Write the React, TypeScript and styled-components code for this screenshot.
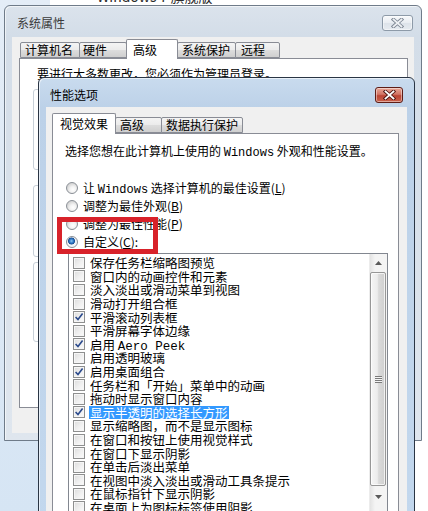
import React from "react";
import styled, { createGlobalStyle } from "styled-components";

const Global = createGlobalStyle`
  html, body { margin: 0; padding: 0; }
  body {
    width: 428px;
    height: 511px;
    overflow: hidden;
    font-family: "Noto Sans CJK SC", "Liberation Sans", sans-serif;
    font-size: 12px;
    color: #000;
  }
`;

const CJK = `"Noto Sans CJK SC", "Liberation Sans", sans-serif`;

const Desktop = styled.div`
  position: relative;
  width: 428px;
  height: 511px;
  overflow: hidden;
  display: flex;
  background: #fff;
`;

const NavPane = styled.div`
  width: 50px;
  background: linear-gradient(180deg, #e4edf7 0%, #d6e5f4 100%);
`;

const MainPane = styled.div`
  flex: 1;
  background: #fff;
`;

const Heading = styled.div`
  margin: -12px 0 0 47px;
  font-family: ${CJK};
  font-size: 14px;
  line-height: 16px;
  color: #2b2b2b;
`;

/* ---------- windows ---------- */

const Window = styled.div<{ $active?: boolean }>`
  position: absolute;
  box-sizing: border-box;
  display: flex;
  flex-direction: column;
  border: 1px solid ${(p) => (p.$active ? "#2a3544" : "#6f7b89")};
  border-radius: 6px 6px 0 0;
  background: ${(p) =>
    p.$active
      ? "linear-gradient(180deg, #c9dbee 0px, #bcd1e8 30px, #c3d8ee 100%)"
      : "linear-gradient(180deg, #dbe3ec 0px, #d3dde8 30px, #dfe6ee 100%)"};
  box-shadow: inset 1px 1px 0 rgba(255, 255, 255, 0.6);
`;

const OuterWindow = styled(Window)`
  left: 4px;
  top: 5px;
  width: 418px;
  height: 436px;
`;

const InnerWindow = styled(Window)`
  left: 38px;
  top: 77px;
  width: 377px;
  height: 470px;
`;

const TitleBar = styled.div<{ $h: number; $pt: number; $pl: number; $pr: number }>`
  height: ${(p) => p.$h}px;
  flex: none;
  box-sizing: border-box;
  display: flex;
  align-items: flex-start;
  justify-content: space-between;
  padding: ${(p) => `${p.$pt}px ${p.$pr}px 0 ${p.$pl}px`};
`;

const Title = styled.span<{ $active?: boolean }>`
  display: inline-block;
  height: 16px;
  font-family: ${CJK};
  font-size: 12px;
  line-height: 16px;
  color: ${(p) => (p.$active ? "#000" : "#3a3a3a")};
`;

const CloseBtn = styled.div<{ $active?: boolean; $w: number; $h: number }>`
  width: ${(p) => p.$w}px;
  height: ${(p) => p.$h}px;
  box-sizing: border-box;
  border-radius: 3px;
  display: flex;
  align-items: center;
  justify-content: center;
  border: 1px solid ${(p) => (p.$active ? "#5e1d16" : "#8d9aa8")};
  background: ${(p) =>
    p.$active
      ? "linear-gradient(180deg, #e8a898 0%, #d27464 45%, #bb4434 55%, #c9624c 100%)"
      : "linear-gradient(180deg, #f7f9fb 0%, #e9edf2 50%, #dde3ea 51%, #e6ebf0 100%)"};
  box-shadow: inset 0 0 0 1px rgba(255, 255, 255, 0.45);
`;

const CloseGlyph = ({ active }: { active?: boolean }) => (
  <svg width="13" height="10" viewBox="0 0 13 10">
    <path
      d="M2.5 1.5 L10.5 8.5 M10.5 1.5 L2.5 8.5"
      stroke={active ? "#4a1410" : "#7d8794"}
      strokeWidth="3.6"
      strokeLinecap="square"
      fill="none"
    />
    <path
      d="M2.5 1.5 L10.5 8.5 M10.5 1.5 L2.5 8.5"
      stroke={active ? "#ffffff" : "#eef1f4"}
      strokeWidth="1.8"
      strokeLinecap="square"
      fill="none"
    />
  </svg>
);

const Client = styled.div<{ $ml: number; $mr: number; $pt: number; $pl: number; $pr: number }>`
  flex: 1;
  display: flex;
  flex-direction: column;
  background: #f0f0f0;
  margin: 0 ${(p) => p.$mr}px 7px ${(p) => p.$ml}px;
  padding: ${(p) => `${p.$pt}px ${p.$pr}px 0 ${p.$pl}px`};
  min-height: 0;
`;

const TabStrip = styled.div<{ $h: number; $pl: number }>`
  height: ${(p) => p.$h}px;
  flex: none;
  display: flex;
  align-items: flex-end;
  padding-left: ${(p) => p.$pl}px;
  position: relative;
  z-index: 1;
`;

const Tab = styled.div<{ $w: number; $sel?: boolean; $h: number; $pl: number }>`
  width: ${(p) => p.$w}px;
  height: ${(p) => p.$h}px;
  box-sizing: border-box;
  border: 1px solid #898c95;
  border-bottom: ${(p) => (p.$sel ? "none" : "1px solid #898c95")};
  margin-bottom: ${(p) => (p.$sel ? "-1px" : "0")};
  border-radius: 2px 2px 0 0;
  background: ${(p) =>
    p.$sel ? "#fff" : "linear-gradient(180deg, #f4f4f4 0%, #ebebeb 50%, #dddddd 51%, #cfcfcf 100%)"};
  display: flex;
  align-items: center;
  padding-left: ${(p) => p.$pl}px;
  font-family: ${CJK};
  font-size: 12px;
  line-height: 14px;
  white-space: nowrap;
  margin-right: -1px;
`;

const Panel = styled.div<{ $h?: number }>`
  box-sizing: border-box;
  background: #fff;
  border: 1px solid #898c95;
  ${(p) => (p.$h ? `height: ${p.$h}px; flex: none;` : "flex: 1;")}
  display: flex;
  flex-direction: column;
  min-height: 0;
`;

/* ---------- outer panel content ---------- */

const OuterText = styled.div`
  padding: 8px 0 0 17px;
  font-family: ${CJK};
  font-size: 12px;
  line-height: 14px;
  height: 14px;
  white-space: nowrap;
`;

const GroupBox = styled.div<{ $mt: number; $h: number }>`
  margin: ${(p) => p.$mt}px 0 0 13px;
  width: 362px;
  height: ${(p) => p.$h}px;
  box-sizing: border-box;
  border: 1px solid #c8d0d8;
  border-radius: 3px;
`;

/* ---------- inner panel content ---------- */

const InnerContent = styled.div`
  padding: 10px 10px 0 12px;
  display: flex;
  flex-direction: column;
`;

const Desc = styled.div`
  font-family: ${CJK};
  font-size: 12px;
  line-height: 14px;
  height: 14px;
  white-space: nowrap;
`;

const Mono = styled.span`
  font-family: "Liberation Mono", "DejaVu Sans Mono", monospace;
`;

const RadioGroup = styled.div`
  margin: 21px 0 0 1px;
  display: flex;
  flex-direction: column;
`;

const RadioRow = styled.div`
  height: 18px;
  display: flex;
  align-items: center;
  gap: 5px;
  white-space: nowrap;
`;

const RadioLabel = styled.span`
  display: inline-block;
  height: 14px;
  font-family: ${CJK};
  font-size: 12px;
  line-height: 14px;
`;

const RadioDot = styled.span<{ $on?: boolean }>`
  width: 12px;
  height: 12px;
  flex: none;
  box-sizing: border-box;
  border-radius: 50%;
  border: 1px solid #8a8f96;
  background: ${(p) =>
    p.$on
      ? "radial-gradient(circle at 45% 40%, #8fc8f2 0px, #2f79c6 2px, #1a4f94 3.2px, #eef2f6 3.8px, #ffffff 100%)"
      : "radial-gradient(circle at 60% 65%, #ffffff 0px, #f3f3f3 3px, #d7d7d7 6px)"};
`;

const ListBox = styled.div`
  margin: 2px 0 0 3px;
  width: 320px;
  height: 270px;
  box-sizing: border-box;
  border: 1px solid #828790;
  display: flex;
  background: #fff;
`;

const ListItems = styled.div`
  flex: 1;
  padding-top: 2px;
  display: flex;
  flex-direction: column;
  overflow: hidden;
`;

const ItemRow = styled.div`
  height: 13.6px;
  flex: none;
  display: flex;
  align-items: center;
  padding-left: 4px;
  gap: 4px;
  white-space: nowrap;
`;

const CheckBox = styled.span`
  width: 12px;
  height: 12px;
  flex: none;
  box-sizing: border-box;
  border: 1px solid #8e8f8f;
  background: linear-gradient(135deg, #dcdcdc 0%, #f0f0f0 55%, #fbfbfb 100%);
  box-shadow: inset 0 0 0 1px #f6f6f6;
  display: flex;
  align-items: center;
  justify-content: center;
`;

const ItemText = styled.span<{ $sel?: boolean }>`
  display: inline-block;
  height: 13px;
  font-family: ${CJK};
  font-size: 12.5px;
  line-height: 13px;
  padding: 0 1px;
  color: ${(p) => (p.$sel ? "#fff" : "#000")};
  background: ${(p) => (p.$sel ? "#3399ff" : "transparent")};
`;

const ScrollBar = styled.div`
  width: 17px;
  flex: none;
  display: flex;
  flex-direction: column;
  background: linear-gradient(90deg, #e3e3e3 0%, #f4f4f4 30%, #f4f4f4 100%);
  border-left: 1px solid #ececec;
`;

const ArrowBtn = styled.div`
  height: 17px;
  flex: none;
  display: flex;
  align-items: center;
  justify-content: center;
`;

const Thumb = styled.div`
  margin: 1px 1px 2px 0;
  height: 214px;
  box-sizing: border-box;
  border: 1px solid #979797;
  border-radius: 2px;
  background: linear-gradient(90deg, #f5f5f5 0%, #ececec 45%, #dadada 55%, #cfcfcf 100%);
  box-shadow: inset 0 0 0 1px rgba(255, 255, 255, 0.7);
  display: flex;
  align-items: center;
  justify-content: center;
`;

const Grip = styled.div`
  width: 7px;
  height: 7px;
  background: repeating-linear-gradient(180deg, #7a7a7a 0px, #7a7a7a 1px, #f4f4f4 1px, #f4f4f4 2px);
`;

const RedBox = styled.div`
  position: absolute;
  left: 57px;
  top: 217px;
  width: 101px;
  height: 37px;
  box-sizing: border-box;
  border: 5px solid #d8222a;
`;

const Check = () => (
  <svg width="10" height="10" viewBox="0 0 10 10">
    <path d="M1.6 5 L4 7.6 L8.6 1.6" stroke="#2b4a8c" strokeWidth="1.6" fill="none" />
  </svg>
);

const Tri = ({ up }: { up?: boolean }) => (
  <svg width="7" height="4" viewBox="0 0 7 4">
    <path d={up ? "M0 4 L3.5 0 L7 4 Z" : "M0 0 L3.5 4 L7 0 Z"} fill="#5a5a5a" />
  </svg>
);

type Item = { label: React.ReactNode; checked?: boolean; selected?: boolean };

const items: Item[] = [
  { label: "保存任务栏缩略图预览" },
  { label: "窗口内的动画控件和元素" },
  { label: "淡入淡出或滑动菜单到视图" },
  { label: "滑动打开组合框" },
  { label: "平滑滚动列表框", checked: true },
  { label: "平滑屏幕字体边缘" },
  { label: <>启用 <Mono>Aero Peek</Mono></>, checked: true },
  { label: "启用透明玻璃" },
  { label: "启用桌面组合", checked: true },
  { label: "任务栏和「开始」菜单中的动画" },
  { label: "拖动时显示窗口内容" },
  { label: "显示半透明的选择长方形", checked: true, selected: true },
  { label: "显示缩略图，而不是显示图标" },
  { label: "在窗口和按钮上使用视觉样式" },
  { label: "在窗口下显示阴影" },
  { label: "在单击后淡出菜单" },
  { label: "在视图中淡入淡出或滑动工具条提示" },
  { label: "在鼠标指针下显示阴影" },
  { label: "在桌面上为图标标签使用阴影" },
];

const outerTabs = [
  { t: "计算机名", w: 60, pl: 4 },
  { t: "硬件", w: 48, pl: 3 },
  { t: "高级", w: 52, pl: 6, sel: true },
  { t: "系统保护", w: 59, pl: 4 },
  { t: "远程", w: 45, pl: 5 },
];

const innerTabs = [
  { t: "视觉效果", w: 64, pl: 7, sel: true },
  { t: "高级", w: 47, pl: 4 },
  { t: "数据执行保护", w: 82, pl: 4 },
];

export default function App() {
  return (
    <>
      <Global />
      <Desktop>
        <NavPane />
        <MainPane>
          <Heading>Windows 7 旗舰版</Heading>
        </MainPane>

        <OuterWindow>
          <TitleBar $h={31} $pt={9} $pl={12} $pr={8}>
            <Title>系统属性</Title>
            <CloseBtn $w={31} $h={16}>
              <CloseGlyph />
            </CloseBtn>
          </TitleBar>
          <Client $ml={7} $mr={7} $pt={2} $pl={7} $pr={6}>
            <TabStrip $h={19} $pl={1}>
              {outerTabs.map((tb) => (
                <Tab key={tb.t} $w={tb.w} $h={tb.sel ? 20 : 16} $sel={tb.sel} $pl={tb.pl}>
                  {tb.t}
                </Tab>
              ))}
            </TabStrip>
            <Panel $h={350}>
              <OuterText>要进行大多数更改，您必须作为管理员登录。</OuterText>
              <GroupBox $mt={8} $h={81} />
              <GroupBox $mt={15} $h={72} />
              <GroupBox $mt={5} $h={80} />
            </Panel>
          </Client>
        </OuterWindow>

        <InnerWindow $active>
          <TitleBar $h={29} $pt={9} $pl={11} $pr={11}>
            <Title $active>性能选项</Title>
            <CloseBtn $active $w={28} $h={16}>
              <CloseGlyph active />
            </CloseBtn>
          </TitleBar>
          <Client $ml={7} $mr={7} $pt={6} $pl={6} $pr={8}>
            <TabStrip $h={20} $pl={0}>
              {innerTabs.map((tb) => (
                <Tab key={tb.t} $w={tb.w} $h={tb.sel ? 21 : 16} $sel={tb.sel} $pl={tb.pl}>
                  {tb.t}
                </Tab>
              ))}
            </TabStrip>
            <Panel>
              <InnerContent>
                <Desc>
                  选择您想在此计算机上使用的 <Mono>Windows</Mono> 外观和性能设置。
                </Desc>
                <RadioGroup>
                  <RadioRow>
                    <RadioDot />
                    <RadioLabel>
                      让 <Mono>Windows</Mono> 选择计算机的最佳设置(<u>L</u>)
                    </RadioLabel>
                  </RadioRow>
                  <RadioRow>
                    <RadioDot />
                    <RadioLabel>
                      调整为最佳外观(<u>B</u>)
                    </RadioLabel>
                  </RadioRow>
                  <RadioRow>
                    <RadioDot />
                    <RadioLabel>
                      调整为最佳性能(<u>P</u>)
                    </RadioLabel>
                  </RadioRow>
                  <RadioRow>
                    <RadioDot $on />
                    <RadioLabel>
                      自定义(<u>C</u>):
                    </RadioLabel>
                  </RadioRow>
                </RadioGroup>
                <ListBox>
                  <ListItems>
                    {items.map((it, i) => (
                      <ItemRow key={i}>
                        <CheckBox>{it.checked && <Check />}</CheckBox>
                        <ItemText $sel={it.selected}>{it.label}</ItemText>
                      </ItemRow>
                    ))}
                  </ListItems>
                  <ScrollBar>
                    <ArrowBtn>
                      <Tri up />
                    </ArrowBtn>
                    <Thumb>
                      <Grip />
                    </Thumb>
                    <ArrowBtn>
                      <Tri />
                    </ArrowBtn>
                  </ScrollBar>
                </ListBox>
              </InnerContent>
            </Panel>
          </Client>
        </InnerWindow>

        <RedBox />
      </Desktop>
    </>
  );
}
